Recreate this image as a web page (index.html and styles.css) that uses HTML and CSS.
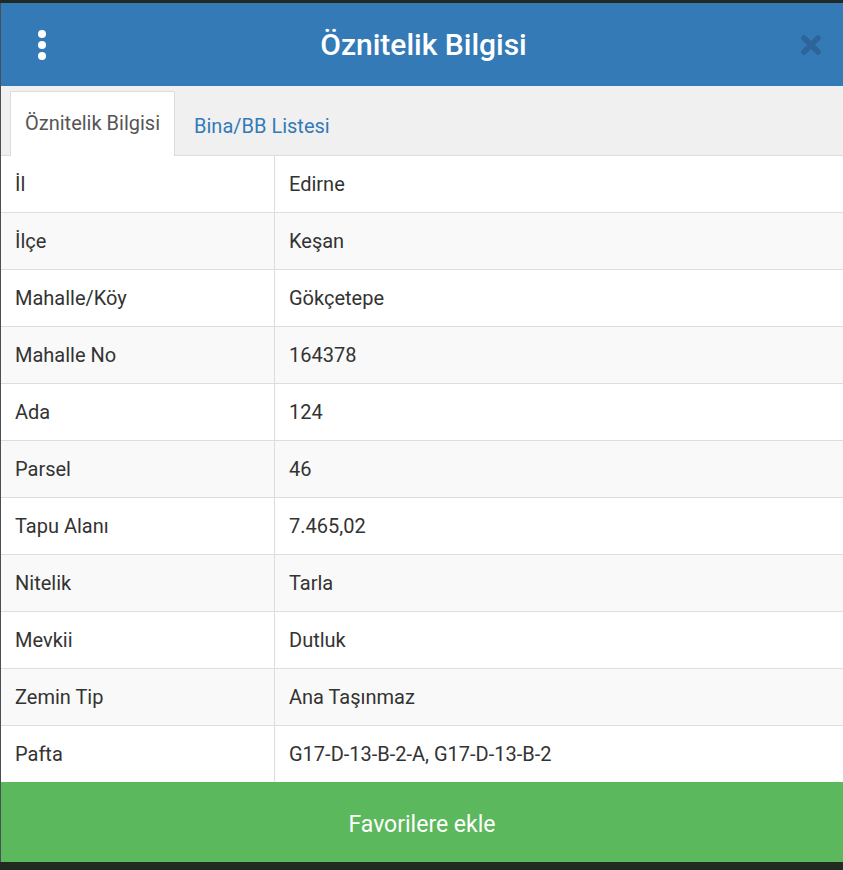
FILE: index.html
```html
<!DOCTYPE html>
<html lang="tr">
<head>
    <meta charset="UTF-8">
    <meta name="viewport" content="width=device-width, initial-scale=1.0">
    <title>Öznitelik Bilgisi</title>
    <link rel="stylesheet" href="styles.css">
</head>
<body>
    <div class="panel">
        <div class="header">
            <button class="menu-btn" aria-label="Menü">
                <span class="dot"></span>
                <span class="dot"></span>
                <span class="dot"></span>
            </button>
            <div class="header-title">Öznitelik Bilgisi</div>
            <button class="close-btn" aria-label="Kapat">
                <svg width="24" height="24" viewBox="0 0 24 24">
                    <path d="M5 5 L19 19 M19 5 L5 19" stroke="#2e6499" stroke-width="5.5" stroke-linecap="round"/>
                </svg>
            </button>
        </div>
        <div class="tabs">
            <a href="#" class="tab active">Öznitelik Bilgisi</a>
            <a href="#" class="tab">Bina/BB Listesi</a>
        </div>
        <table class="attr-table">
            <tr><td>İl</td><td>Edirne</td></tr>
            <tr><td>İlçe</td><td>Keşan</td></tr>
            <tr><td>Mahalle/Köy</td><td>Gökçetepe</td></tr>
            <tr><td>Mahalle No</td><td>164378</td></tr>
            <tr><td>Ada</td><td>124</td></tr>
            <tr><td>Parsel</td><td>46</td></tr>
            <tr><td>Tapu Alanı</td><td>7.465,02</td></tr>
            <tr><td>Nitelik</td><td>Tarla</td></tr>
            <tr><td>Mevkii</td><td>Dutluk</td></tr>
            <tr><td>Zemin Tip</td><td>Ana Taşınmaz</td></tr>
            <tr><td>Pafta</td><td>G17-D-13-B-2-A, G17-D-13-B-2</td></tr>
        </table>
        <button class="fav-btn">Favorilere ekle</button>
    </div>
</body>
</html>
```

FILE: styles.css
```css
body {
    margin: 0;
    padding: 3px 0 8px;
    background-color: #1f2b22;
    font-family: Roboto, "Liberation Sans", sans-serif;
}
.panel {
    display: flex;
    flex-direction: column;
    background-color: #fff;
    border-left: 1px solid #4a4f55;
}
.header {
    display: flex;
    align-items: center;
    justify-content: space-between;
    height: 83px;
    padding: 0 20px 0 28px;
    background-color: #337ab7;
}
.menu-btn {
    display: flex;
    flex-direction: column;
    gap: 3px;
    width: 26px;
    padding: 0;
    background: none;
    border: none;
    align-items: center;
}
.dot {
    width: 8px;
    height: 8px;
    border-radius: 50%;
    background-color: #fff;
}
.header-title {
    margin-right: 7px;
    color: #fff;
    font-size: 30px;
    font-weight: 500;
}
.close-btn {
    padding: 0;
    background: none;
    border: none;
    width: 24px;
    height: 24px;
}
.tabs {
    display: flex;
    align-items: flex-end;
    height: 69px;
    padding-left: 9px;
    background-color: #f0f0f0;
    border-bottom: 1px solid #ddd;
}
.tab {
    display: block;
    height: 62px;
    padding: 0 14px 0 18px;
    line-height: 62px;
    font-size: 20px;
    color: #337ab7;
    text-decoration: none;
    box-sizing: border-box;
    border: 1px solid transparent;
    border-bottom: none;
    margin-bottom: -1px;
}
.tab.active {
    padding: 0 14px;
    color: #555;
    background-color: #fff;
    border-color: #ddd;
    height: 65px;
}
.attr-table {
    width: 100%;
    border-collapse: collapse;
    font-size: 20px;
    color: #333;
}
.attr-table td {
    height: 56px;
    padding: 0 14px;
    border-top: 1px solid #ddd;
}
.attr-table td:first-child {
    width: 245px;
    border-right: 1px solid #ddd;
}
.attr-table tr:first-child td {
    border-top: none;
}
.attr-table tr:nth-child(even) td {
    background-color: #f9f9f9;
}
.fav-btn {
    height: 80px;
    padding-top: 6px;
    border: none;
    background-color: #5cb85c;
    color: #fff;
    font-family: Roboto, "Liberation Sans", sans-serif;
    font-size: 23px;
}
```
